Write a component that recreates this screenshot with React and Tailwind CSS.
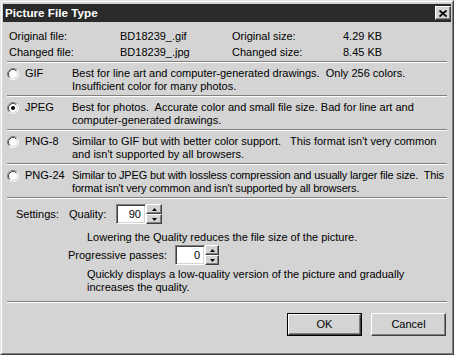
import React from "react";

const formats = [
  {
    id: "gif",
    label: "GIF",
    lines: ["Best for line art and computer-generated drawings.  Only 256 colors.", "Insufficient color for many photos."],
  },
  {
    id: "jpeg",
    label: "JPEG",
    checked: true,
    lines: ["Best for photos.  Accurate color and small file size. Bad for line art and", "computer-generated drawings."],
  },
  {
    id: "png8",
    label: "PNG-8",
    lines: ["Similar to GIF but with better color support.   This format isn't very common", "and isn't supported by all browsers."],
  },
  {
    id: "png24",
    label: "PNG-24",
    tight: true,
    lines: ["Similar to JPEG but with lossless compression and usually larger file size.  This", "format isn't very common and isn't supported by all browsers."],
  },
];

function Radio({ checked }) {
  return (
    <svg width="12" height="12" viewBox="0 0 12 12" className="shrink-0">
      <circle cx="6" cy="6" r="5" fill="#fff" />
      <path d="M2.11 9.89 A5.5 5.5 0 0 1 9.89 2.11" fill="none" stroke="#808080" strokeWidth="1" />
      <path d="M9.89 2.11 A5.5 5.5 0 0 1 2.11 9.89" fill="none" stroke="#fff" strokeWidth="1" />
      <path d="M2.82 9.18 A4.5 4.5 0 0 1 9.18 2.82" fill="none" stroke="#404040" strokeWidth="1" />
      <path d="M9.18 2.82 A4.5 4.5 0 0 1 2.82 9.18" fill="none" stroke="#d4d4d4" strokeWidth="1" />
      {checked ? <circle cx="6" cy="6" r="2" fill="#000" /> : null}
    </svg>
  );
}

function Separator({ className = "" }) {
  return <div className={`h-[2px] border-t border-t-[#808080] border-b border-b-white ${className}`} />;
}

function Spinner({ width }) {
  const btn =
    "flex-1 flex items-center justify-center bg-[#d4d4d4] border-t border-l border-t-white border-l-white border-r border-b border-r-[#404040] border-b-[#404040] shadow-[inset_-1px_-1px_0_#808080]";
  return (
    <div className={`flex flex-col h-[20px] ${width}`}>
      <div className={btn}>
        <svg width="5" height="3" viewBox="0 0 5 3">
          <path d="M2.5 0 L5 3 L0 3 Z" fill="#000" />
        </svg>
      </div>
      <div className={btn}>
        <svg width="5" height="3" viewBox="0 0 5 3">
          <path d="M0 0 L5 0 L2.5 3 Z" fill="#000" />
        </svg>
      </div>
    </div>
  );
}

function NumberBox({ value, width, spinWidth }) {
  return (
    <div className="flex">
      <div
        className={`h-[20px] ${width} bg-white border-t border-l border-t-[#808080] border-l-[#808080] border-r border-b border-r-white border-b-white shadow-[inset_1px_1px_0_#404040,inset_-1px_-1px_0_#d4d4d4] flex items-center justify-end pr-[4px]`}
      >
        {value}
      </div>
      <Spinner width={spinWidth} />
    </div>
  );
}

export default function App() {
  return (
    <div className="w-[454px] h-[355px] bg-[#d4d4d4] font-['Liberation_Sans',Arial,sans-serif] text-[11px] text-black border border-t-[#e4e4e4] border-l-[#e4e4e4] border-r-[#404040] border-b-[#404040]">
      <div className="h-full border border-t-white border-l-white border-r-[#808080] border-b-[#808080] p-[1px] flex flex-col">
        {/* Title bar */}
        <div className="mt-[1px] h-[18px] bg-[#2a2a2a] flex items-center justify-between pl-[2px] shrink-0">
          <span className="text-white font-bold text-[11.7px] leading-none">Picture File Type</span>
          <div className="w-[16px] h-[14px] bg-[#d4d4d4] border-t border-l border-t-white border-l-white border-r border-b border-r-[#404040] border-b-[#404040] shadow-[inset_-1px_-1px_0_#808080] flex items-center justify-center">
            <svg width="8" height="7" viewBox="0 0 8 7">
              <path d="M0.5 0.5 L7.5 6.5 M7.5 0.5 L0.5 6.5" stroke="#000" strokeWidth="1.8" />
            </svg>
          </div>
        </div>

        <div className="px-[4px] flex flex-col">
          {/* File info */}
          <div className="grid grid-cols-[111px_112px_111px_1fr] pl-[2px] pt-[6px] leading-[16px]">
            <span>Original file:</span>
            <span>BD18239_.gif</span>
            <span>Original size:</span>
            <span>4.29 KB</span>
            <span>Changed file:</span>
            <span>BD18239_.jpg</span>
            <span>Changed size:</span>
            <span>8.45 KB</span>
          </div>
          <Separator className="mt-[1px]" />

          {/* Formats */}
          {formats.map((f) => (
            <div key={f.id}>
              <div className="grid grid-cols-[65px_1fr] pt-[4px] pb-[2px] leading-[13px]">
                <div className="flex items-start gap-[6px]">
                  <div className="mt-[1px]">
                    <Radio checked={f.checked} />
                  </div>
                  <span>{f.label}</span>
                </div>
                <div className={f.tight ? "whitespace-pre tracking-[-0.17px]" : "whitespace-pre"}>
                  {f.lines.map((l) => (
                    <div key={l}>{l}</div>
                  ))}
                </div>
              </div>
              <Separator />
            </div>
          ))}

          {/* Settings */}
          <div className="flex items-center mt-[5px] leading-[13px]">
            <span className="ml-[9px] w-[53px]">Settings:</span>
            <span className="w-[47px]">Quality:</span>
            <NumberBox value="90" width="w-[30px]" spinWidth="w-[16px]" />
          </div>
          <p className="ml-[80px] mt-[7px] leading-[13px]">Lowering the Quality reduces the file size of the picture.</p>
          <div className="flex items-center mt-[1px] leading-[13px]">
            <span className="ml-[61px] w-[107px]">Progressive passes:</span>
            <NumberBox value="0" width="w-[30px]" spinWidth="w-[14px]" />
          </div>
          <p className="ml-[80px] mt-[3px] leading-[13px]">
            Quickly displays a low-quality version of the picture and gradually
            <br />
            increases the quality.
          </p>
          <Separator className="mt-[7px]" />

          {/* Buttons */}
          <div className="flex justify-end gap-[9px] mt-[10px] mr-[1px]">
            <button className="w-[75px] h-[23px] border border-black bg-[#d4d4d4] p-0">
              <div className="w-full h-full border-t border-l border-t-white border-l-white border-r border-b border-r-[#404040] border-b-[#404040] shadow-[inset_-1px_-1px_0_#808080] flex items-center justify-center">
                OK
              </div>
            </button>
            <button className="w-[75px] h-[23px] bg-[#d4d4d4] border-t border-l border-t-white border-l-white border-r border-b border-r-[#404040] border-b-[#404040] shadow-[inset_-1px_-1px_0_#808080] flex items-center justify-center">
              Cancel
            </button>
          </div>
        </div>
      </div>
    </div>
  );
}
